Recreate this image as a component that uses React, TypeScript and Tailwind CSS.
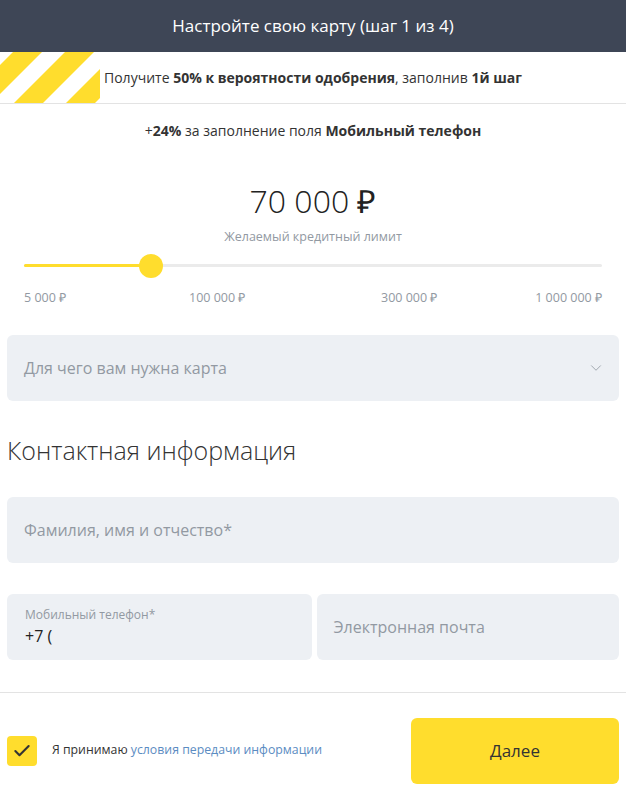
import { ChevronDown, Check } from "lucide-react";

const font = { fontFamily: '"Open Sans", "Liberation Sans", sans-serif' };

function Stripes() {
  // диагональные полосы слева от баннера
  const bands = [0, 1, 2].map((k) => {
    const a = 13 + 52 * k;
    const b = 42 + 52 * k;
    return `${a},0 ${b},0 ${b - 51},51 ${a - 51},51`;
  });
  return (
    <svg width="100" height="51" viewBox="0 0 100 51" className="shrink-0 block">
      {bands.map((p) => (
        <polygon key={p} points={p} fill="#ffdd2d" />
      ))}
    </svg>
  );
}

function Field({ label, className = "" }: { label: string; className?: string }) {
  return (
    <div className={`h-[66px] rounded-md bg-[#edf0f4] flex items-center px-[17px] ${className}`}>
      <span className="text-[16px] text-[#9299a2]">{label}</span>
    </div>
  );
}

export default function App() {
  return (
    <div style={font} className="w-[626px] min-h-[792px] bg-white text-[#333]">
      {/* Шапка */}
      <div className="h-[52px] bg-[#3e4656] flex items-center justify-center">
        <h1 className="text-white text-[17px]">Настройте свою карту (шаг 1 из 4)</h1>
      </div>

      {/* Баннер */}
      <div className="h-[52px] flex items-center border-b border-[#e3e3e3]">
        <Stripes />
        <p className="ml-[4px] text-[14px] text-[#333]">
          Получите <b>50% к вероятности одобрения</b>, заполнив <b>1й шаг</b>
        </p>
      </div>

      <p className="mt-[16px] text-center text-[14px]">
        +<b>24%</b> за заполнение поля <b>Мобильный телефон</b>
      </p>

      {/* Сумма */}
      <div className="mt-[40px] text-center">
        <div className="text-[32px] font-light leading-[40px] text-[#222]">70 000 ₽</div>
        <div className="mt-[7px] text-[12.5px] text-[#9299a2]">Желаемый кредитный лимит</div>
      </div>

      <div className="px-[24px]">
        <div className="relative mt-[7px] h-[24px] flex items-center">
          <div className="h-[3px] w-full bg-[#ebebeb] rounded-full">
            <div className="h-[3px] w-[116px] bg-[#ffdd2d] rounded-full" />
          </div>
          <div className="absolute left-[115px] top-0 w-[24px] h-[24px] rounded-full bg-[#ffdd2d]" />
        </div>
        <div className="mt-[11px] flex text-[12.5px] text-[#9299a2]">
          <span className="w-[165px]">5 000 ₽</span>
          <span className="w-[192px]">100 000 ₽</span>
          <span>300 000 ₽</span>
          <span className="ml-auto">1 000 000 ₽</span>
        </div>
      </div>

      <div className="px-[7px]">
        <div className="mt-[27px] h-[66px] rounded-md bg-[#edf0f4] flex items-center justify-between pl-[17px] pr-[14px]">
          <span className="text-[16px] text-[#9299a2]">Для чего вам нужна карта</span>
          <ChevronDown size={18} strokeWidth={1.2} className="text-[#9aa0a8]" />
        </div>

        <h2 className="mt-[32px] text-[25px] font-light leading-[34px] text-[#333]">Контактная информация</h2>

        <Field label="Фамилия, имя и отчество*" className="mt-[30px]" />

        <div className="mt-[31px] flex gap-[5px]">
          <div className="flex-1 h-[66px] rounded-md bg-[#edf0f4] flex flex-col justify-center px-[18px]">
            <span className="text-[12px] text-[#9299a2] leading-[16px]">Мобильный телефон*</span>
            <span className="text-[16px] text-[#222] leading-[22px] mt-[2px]">+7 (</span>
          </div>
          <Field label="Электронная почта" className="flex-1" />
        </div>
      </div>

      <div className="mt-[32px] border-t border-[#e3e3e3]" />

      <div className="px-[7px] mt-[25px] flex items-center justify-between">
        <label className="flex items-center gap-[15px]">
          <span className="w-[30px] h-[30px] rounded-[4px] bg-[#ffdd2d] flex items-center justify-center">
            <Check size={20} strokeWidth={2.5} className="text-[#333]" />
          </span>
          <span className="text-[12.3px] text-[#333]">
            Я принимаю <a className="text-[#5b8cc2]">условия передачи информации</a>
          </span>
        </label>
        <button className="w-[208px] h-[66px] rounded-md bg-[#ffdd2d] text-[17px] text-[#333]">Далее</button>
      </div>
    </div>
  );
}
